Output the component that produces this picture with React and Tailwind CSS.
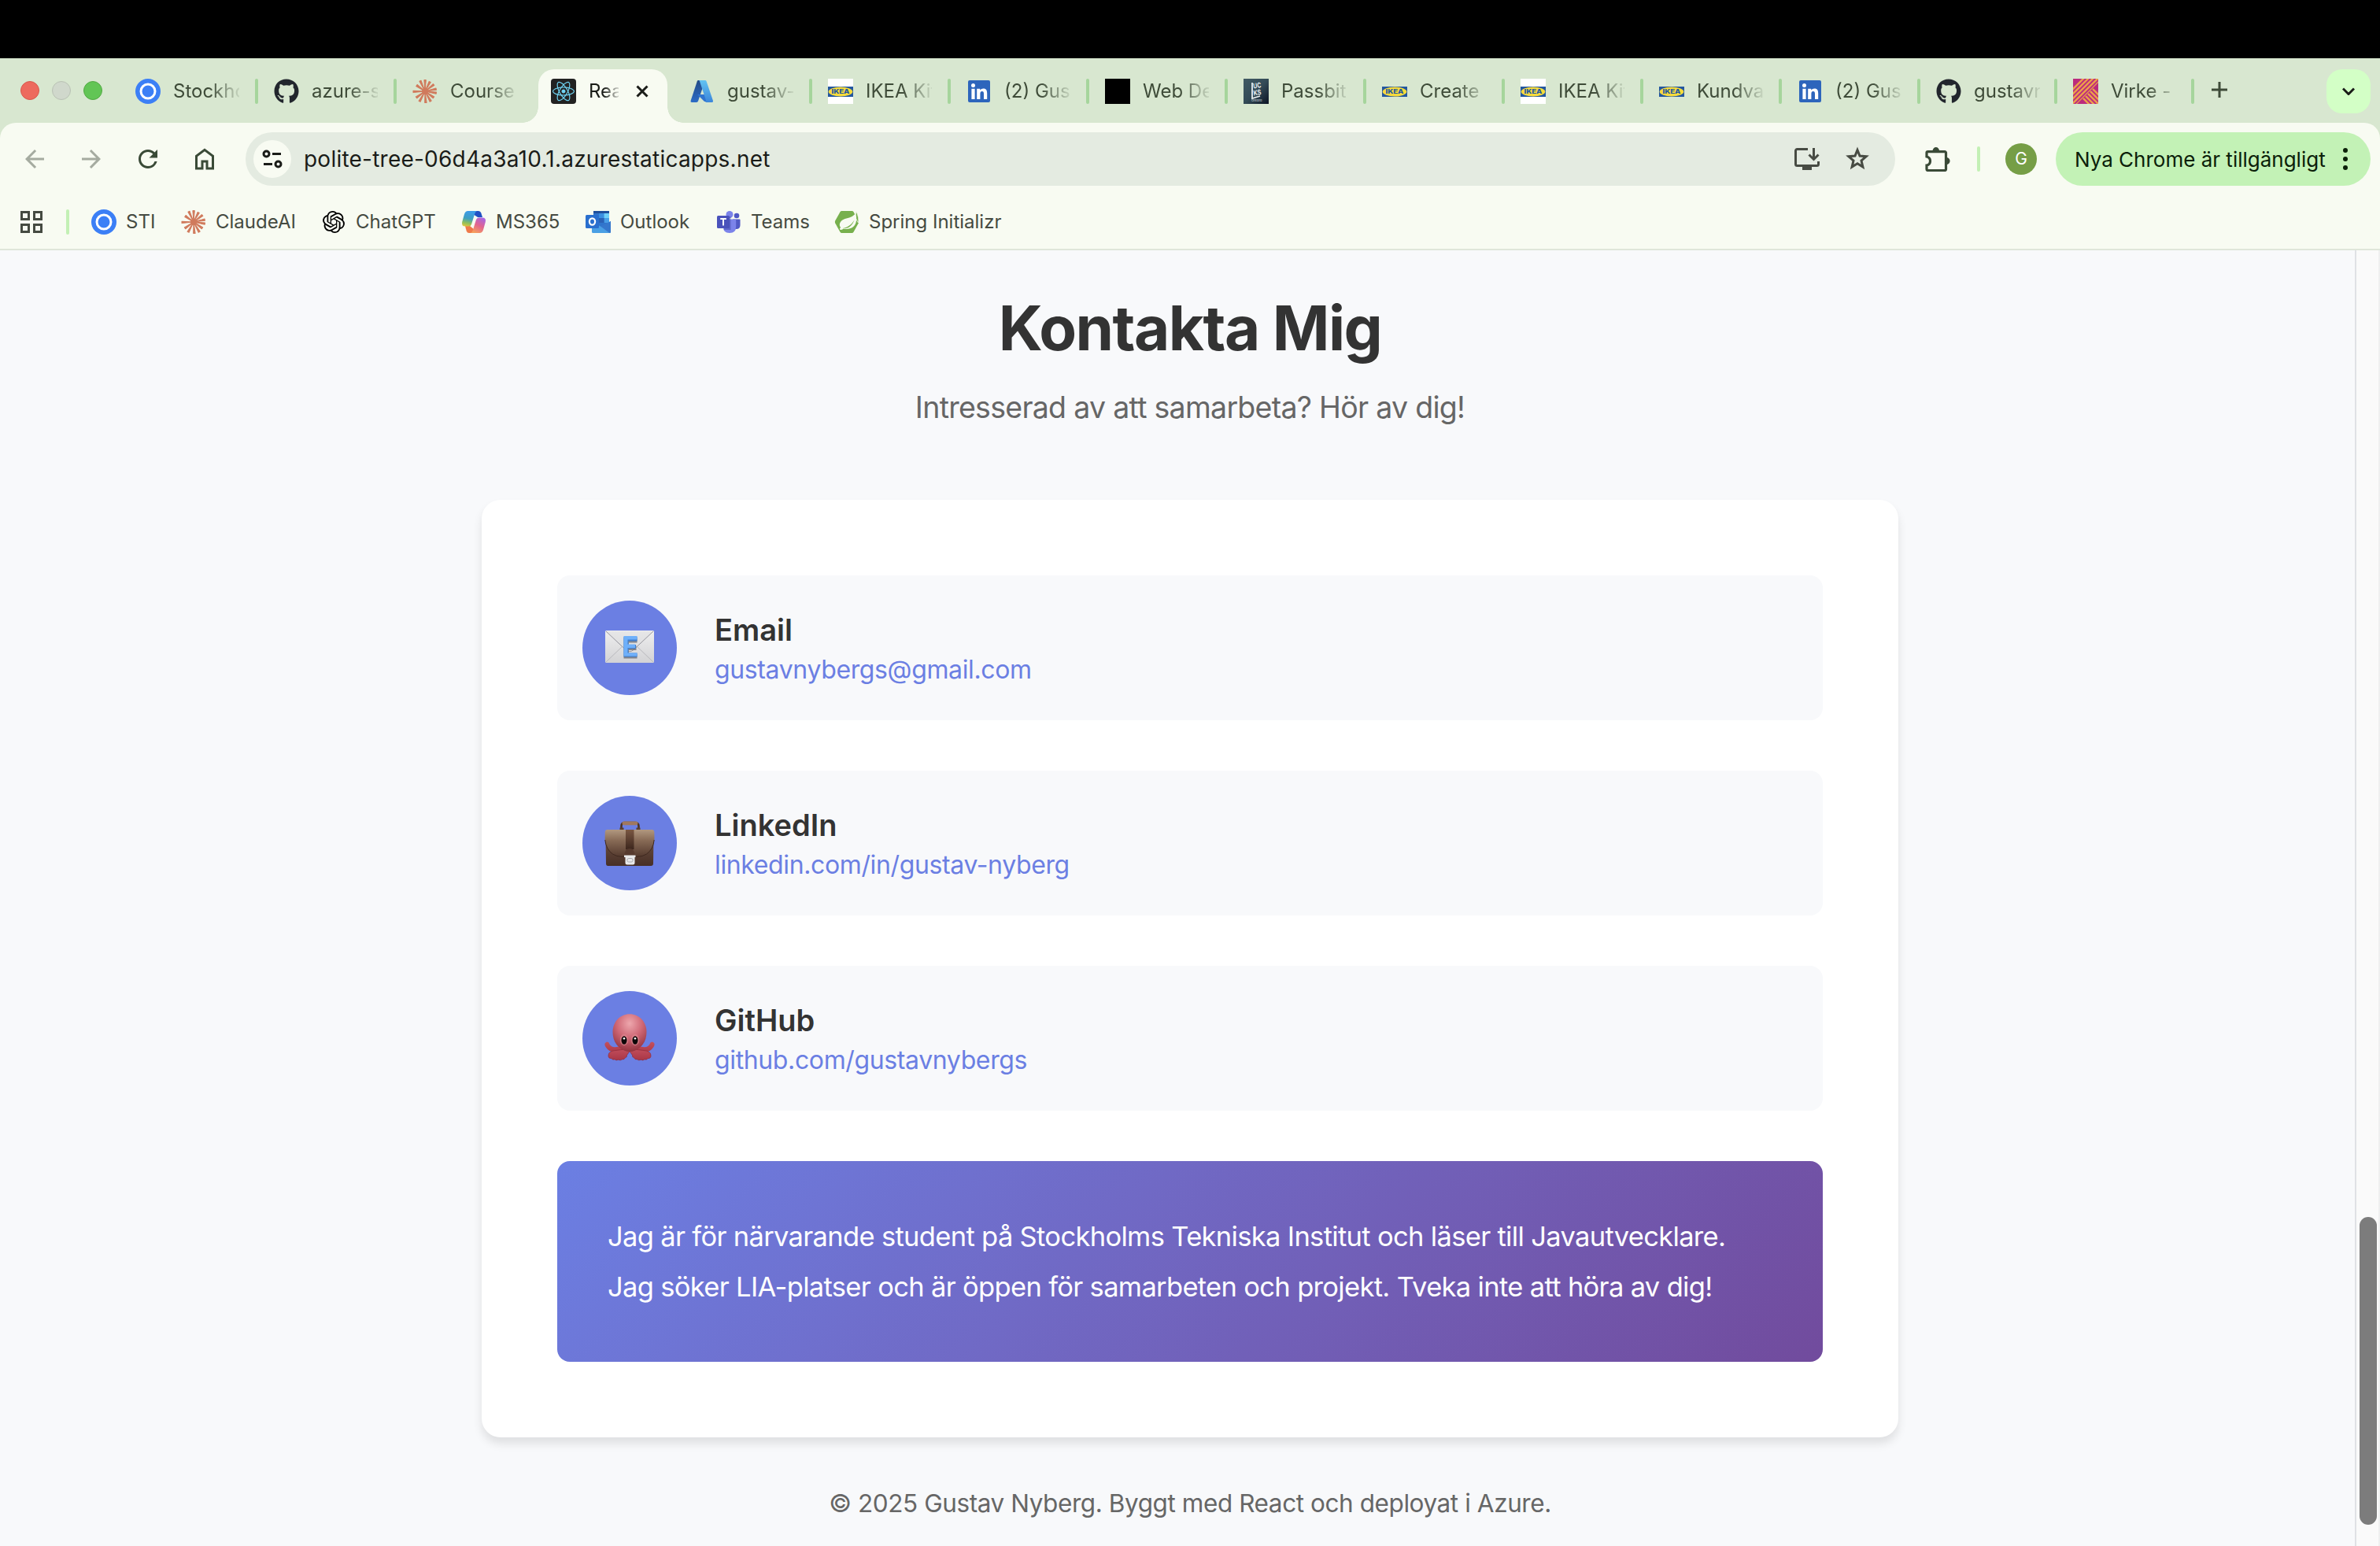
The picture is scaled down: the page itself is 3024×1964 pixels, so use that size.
import React from "react";
import { FaGithub, FaReact } from "react-icons/fa";
import { SiOpenai } from "react-icons/si";
import { MdArrowBack, MdArrowForward, MdRefresh } from "react-icons/md";

function StiIcon() {
  return (
    <svg viewBox="0 0 32 32" className="size-8">
      <circle cx="16" cy="16" r="16" fill="#3b7ff6" />
      <circle cx="16" cy="16" r="9" fill="none" stroke="#fff" strokeWidth="3" />
    </svg>
  );
}

const RAYS = [
  [0, 14.5], [27, 13.5], [52, 14], [78, 14.5], [98, 14.5], [125, 13.5],
  [150, 14.5], [176, 14.5], [208, 14.5], [234, 13.5], [268, 15], [305, 13], [335, 14.5],
];

function ClaudeIcon() {
  return (
    <svg viewBox="0 0 32 32" className="size-8">
      {RAYS.map(([a, r]) => (
        <path key={a} d={`M16 16L14.9 ${16 - r}L17.3 ${16 - r}Z`} transform={`rotate(${a} 16 16)`} fill="#d07a5c" stroke="#d07a5c" strokeWidth="1" strokeLinejoin="round" />
      ))}
      <circle cx="16" cy="16" r="4" fill="#d07a5c" />
    </svg>
  );
}

function GithubIcon() {
  return <FaGithub className="size-8 text-[#22262d]" />;
}

function ReactIcon() {
  return (
    <span className="flex size-8 items-center justify-center rounded bg-[#222]">
      <FaReact className="size-[28px] text-[#6fd3f2]" />
    </span>
  );
}

function AzureIcon() {
  return (
    <svg viewBox="0 0 32 32" className="size-8">
      <defs>
        <linearGradient id="azd" x1="0" y1="0" x2="0" y2="1"><stop offset="0" stopColor="#234a86" /><stop offset="1" stopColor="#2c6cc6" /></linearGradient>
        <linearGradient id="azl" x1="0" y1="0" x2="0" y2="1"><stop offset="0" stopColor="#62c3f2" /><stop offset="1" stopColor="#3c86da" /></linearGradient>
      </defs>
      <path d="M11 2h9L11 28.600q-.5 1.400-2 1.400H3q-2 0-1.400-2L9.800 3.200Q10.200 2 11 2Z" fill="url(#azd)" />
      <path d="M10 20h13l2 9H19Z" fill="#2f74cf" />
      <path d="M12 2h8q1.200 0 1.600 1.200L30 28q.6 2-1.400 2H20q1.600-.4 1-2.400L13 3.200Q12.800 2.300 12 2Z" fill="url(#azl)" />
    </svg>
  );
}

function IkeaLogo() {
  return (
    <svg viewBox="0 0 32 13" className="h-[13px] w-8">
      <rect width="32" height="13" fill="#23579f" />
      <ellipse cx="16" cy="6.500" rx="15.300" ry="6" fill="#f6da3c" />
      <text x="16" y="9.300" textAnchor="middle" textLength="23" lengthAdjust="spacingAndGlyphs" fontFamily="Inter, sans-serif" fontWeight="800" fontSize="7.600" fill="#23579f">IKEA</text>
    </svg>
  );
}

function IkeaSquare() {
  return <span className="flex size-8 items-center bg-white"><IkeaLogo /></span>;
}

function IkeaWide() {
  return <span className="flex size-8 items-center"><IkeaLogo /></span>;
}

function LinkedinIcon() {
  return (
    <svg viewBox="0 0 32 32" className="size-8">
      <rect x="2" y="2" width="28" height="28" rx="2" fill="#2d65bc" />
      <circle cx="8.500" cy="8.500" r="2.500" fill="#fff" />
      <path d="M6.400 12.700h4.200V26H6.400zM13.200 12.700h4v1.900c.7-1.200 2.100-2.200 4.200-2.200 4 0 4.800 2.600 4.800 6.200V26H22v-6.500c0-1.700-.2-3.500-2.200-3.500-2 0-2.400 1.600-2.400 3.400V26h-4.200z" fill="#fff" />
    </svg>
  );
}

function BlackIcon() {
  return <span className="block size-8 bg-black" />;
}

function LucksIcon() {
  return (
    <svg viewBox="0 0 32 32" className="size-8">
      <defs><linearGradient id="lk" x1="0" y1="0" x2="1" y2="1"><stop offset="0" stopColor="#405a63" /><stop offset=".5" stopColor="#334b57" /><stop offset="1" stopColor="#0c1424" /></linearGradient></defs>
      <rect width="32" height="32" fill="url(#lk)" />
      <path d="M11 5v20l10-3" fill="none" stroke="#e8eef0" strokeWidth="1.800" />
      <g fill="#e8eef0" fontFamily="Inter, sans-serif" fontWeight="700">
        <text x="12.500" y="12" fontSize="9" textLength="10" lengthAdjust="spacingAndGlyphs" transform="rotate(-8 16 10)">UC</text>
        <text x="12.500" y="21" fontSize="9" textLength="10" lengthAdjust="spacingAndGlyphs" transform="rotate(-8 16 18)">KS</text>
        <text x="10" y="29" fontSize="4" fillOpacity=".6">Örebro</text>
      </g>
    </svg>
  );
}

function VirkeIcon() {
  return (
    <svg viewBox="0 0 32 32" className="size-8">
      <defs>
        <clipPath id="va"><path d="M0 0H32V5L0 37Z" /></clipPath>
        <clipPath id="vb"><path d="M32 6V32H6L19 19Z" /></clipPath>
        <clipPath id="vc"><rect width="32" height="32" /></clipPath>
      </defs>
      <rect width="32" height="32" fill="#bb2b7d" />
      <g clipPath="url(#vc)" stroke="#eda04a" strokeWidth="2.300">
        <g clipPath="url(#va)">
          {[13, 19, 25, 31, 37].map((s) => <path key={s} d={`M-2 ${s + 2}L${s + 2} -2`} />)}
        </g>
        <g clipPath="url(#vb)">
          {[-12, -6, 0, 6, 12].map((s) => <path key={s} d={`M0 ${s}L34 ${s + 34}`} />)}
        </g>
      </g>
    </svg>
  );
}

const TABS = [
  { title: "Stockho", icon: StiIcon },
  { title: "azure-st", icon: GithubIcon },
  { title: "Course", icon: ClaudeIcon, noSep: true },
  { title: "Rea", icon: ReactIcon, active: true },
  { title: "gustav-", icon: AzureIcon },
  { title: "IKEA Kit", icon: IkeaSquare },
  { title: "(2) Gust", icon: LinkedinIcon },
  { title: "Web De", icon: BlackIcon },
  { title: "Passbit", icon: LucksIcon },
  { title: "Create", icon: IkeaWide },
  { title: "IKEA Kit", icon: IkeaSquare },
  { title: "Kundva", icon: IkeaWide },
  { title: "(2) Gust", icon: LinkedinIcon },
  { title: "gustavn", icon: GithubIcon, narrow: true },
  { title: "Virke -", icon: VirkeIcon, narrow: true },
];

function Tab({ title, icon: Icon, active, noSep, narrow }) {
  if (active) {
    return (
      <div className="relative mr-3 flex h-[68px] w-[164px] shrink-0 items-center self-end rounded-t-[20px] bg-[#f8fbf2] pb-3 pl-4">
        <span className="absolute bottom-0 -left-5 size-5 bg-[radial-gradient(circle_at_0_0,transparent_19.5px,#f8fbf2_20px)]" />
        <span className="absolute -right-5 bottom-0 size-5 bg-[radial-gradient(circle_at_100%_0,transparent_19.5px,#f8fbf2_20px)]" />
        <Icon />
        <span className="ml-4 w-[38px] overflow-hidden whitespace-nowrap text-[#1a1c18] [mask-image:linear-gradient(to_right,#000_50%,transparent_110%)]">{title}</span>
        <svg viewBox="0 0 16 16" className="ml-[22px] size-4 shrink-0"><path d="M1.500 1.500l13 13M14.500 1.500l-13 13" stroke="#1a1c18" strokeWidth="3" /></svg>
      </div>
    );
  }
  return (
    <div className={`flex h-[68px] shrink-0 items-center self-end pb-3 pl-4 ${narrow ? "w-[174px]" : "w-44"}`}>
      <Icon />
      <span className="ml-4 w-[84px] overflow-hidden whitespace-nowrap [mask-image:linear-gradient(to_right,#000_55%,transparent_105%)]">{title}</span>
      {!noSep && <span className={`h-8 w-1 rounded-full bg-[#a6d59c] ${narrow ? "ml-[18px]" : "ml-5"}`} />}
    </div>
  );
}

function TabStrip() {
  return (
    <div className="flex h-[82px] bg-[#d8e7d0] text-[24px] text-[#3e4b38]">
      <div className="flex w-[156px] shrink-0 gap-4 pt-[29px] pl-[26px]">
        <span className="size-6 rounded-full border border-[#d9584c] bg-[#ed6a5e]" />
        <span className="size-6 rounded-full border border-[#b9c2b4] bg-[#d0d8cc]" />
        <span className="size-6 rounded-full border border-[#52a943] bg-[#62c555]" />
      </div>
      {TABS.map((t, i) => <Tab key={i} {...t} />)}
      <svg viewBox="0 0 20 20" className="mt-[30px] ml-[18px] size-5 shrink-0"><path d="M10 0v20M0 10h20" stroke="#3e4b38" strokeWidth="3" /></svg>
      <span className="mt-[14px] mr-3 ml-auto flex size-14 items-center justify-center rounded-[20px] bg-[#d3ffc6]">
        <svg viewBox="0 0 16 10" className="h-2.5 w-4"><path d="M1 1.500l7 7 7-7" fill="none" stroke="#1a1c18" strokeWidth="3" /></svg>
      </span>
    </div>
  );
}

function AddressRow() {
  return (
    <div className="flex h-[92px] items-center">
      <div className="flex w-[312px] items-center gap-9 pl-[26px] text-[#3a4a37]">
        <MdArrowBack className="size-9 text-[#a5aba0]" />
        <MdArrowForward className="size-9 text-[#a5aba0]" />
        <MdRefresh className="size-9" />
        <svg viewBox="0 -960 960 960" className="size-9" fill="currentColor"><path d="M240-200h120v-240h240v240h120v-360L480-740 240-560v360Zm-80 80v-480l320-240 320 240v480H520v-240h-80v240H160Z" /></svg>
      </div>
      <div className="flex h-[68px] w-[2096px] items-center rounded-full bg-[#e4ebe1] pr-8 pl-2.5">
        <span className="flex size-12 items-center justify-center rounded-full bg-[#f8fbf2]">
          <svg viewBox="0 0 26 24" className="h-6 w-[26px]" fill="none" stroke="#1a1c18" strokeWidth="3"><circle cx="5.500" cy="5.500" r="3.500" /><path d="M13 5.500h11M2 18.500h11" /><circle cx="20.500" cy="18.500" r="3.500" /></svg>
        </span>
        <span className="ml-4 text-[28px] tracking-[0.23px] text-[#1a1c18]">polite-tree-06d4a3a10.1.azurestaticapps.net</span>
        <svg viewBox="0 0 32 28" className="ml-auto h-7 w-8" fill="none" stroke="#474b43" strokeWidth="3">
          <path d="M17 1.500H3.500a2 2 0 0 0-2 2v17a2 2 0 0 0 2 2h25a2 2 0 0 0 2-2V17M24.500 0v14M18.500 8.500l6 6 6-6" />
          <path d="M10 23h12v5H10z" fill="#474b43" stroke="none" />
        </svg>
        <svg viewBox="0 0 32 32" className="ml-8 size-8" fill="none" stroke="#474b43" strokeWidth="3">
          <path d="M16 4.500l3 7.500 8.200.7-6.200 5.400 1.900 8L16 21.800 9.100 26.100l1.900-8L4.800 12.700 13 12z" />
        </svg>
      </div>
      <svg viewBox="0 0 32 32" className="ml-[38px] size-8" fill="none" stroke="#3a4a37" strokeWidth="3.200">
        <path d="M3.500 6.600H25a1.500 1.500 0 0 1 1.500 1.500V29a1.500 1.500 0 0 1-1.500 1.500H3.500A1.500 1.500 0 0 1 2 29v-5c3-.4 4.500-2.800 4.500-5.400S5 13.700 2 13V8.100A1.500 1.500 0 0 1 3.500 6.600Z" />
        <path d="M9.500 6a4.300 5 0 0 1 8.600 0zM27 14a4.600 4.600 0 0 1 0 9.200z" fill="#3a4a37" stroke="none" />
      </svg>
      <span className="ml-[34px] h-8 w-1 rounded-full bg-[#c3f0b5]" />
      <span className="ml-8 flex size-10 items-center justify-center rounded-full bg-[#769e46] text-[21px] text-white">G</span>
      <div className="ml-6 flex h-[68px] w-[400px] items-center rounded-full bg-[#c3f2b6] pl-6 text-[#0b2009]">
        <span className="w-[328px] text-[26px] whitespace-nowrap">Nya Chrome är tillgängligt</span>
        <svg viewBox="0 0 8 28" className="ml-3 h-7 w-2" fill="currentColor"><circle cx="4" cy="3" r="3" /><circle cx="4" cy="14" r="3" /><circle cx="4" cy="25" r="3" /></svg>
      </div>
    </div>
  );
}

function GptIcon() {
  return <span className="flex size-8 items-center justify-center"><SiOpenai className="size-7 text-black" /></span>;
}

function CopilotIcon() {
  return (
    <svg viewBox="0 0 32 32" className="size-8">
      <defs>
        <linearGradient id="c1" x1=".3" y1="0" x2=".1" y2="1"><stop offset="0" stopColor="#3d9be8" /><stop offset=".45" stopColor="#3f9fc0" /><stop offset=".75" stopColor="#8fbf5a" /><stop offset="1" stopColor="#e8c63c" /></linearGradient>
        <linearGradient id="c2" x1=".8" y1="0" x2=".3" y2="1"><stop offset="0" stopColor="#a667e6" /><stop offset=".5" stopColor="#e2648f" /><stop offset="1" stopColor="#f6a05c" /></linearGradient>
      </defs>
      <path d="M15 2h7q2.500 0 3.300 2.500L27 10h-6l-6-4z" fill="#2150c4" />
      <path d="M17 30h-7q-2.500 0-3.300-2.500L5 21h6l6 5z" fill="#ef7a4a" />
      <path d="M8.500 2H20q-2 .8-2.800 3.500L13 19q-.8 2.500-3.500 2.500H5Q0 21.500 1.200 16L4 6Q5.300 2 8.500 2Z" fill="url(#c1)" />
      <path d="M23.500 30H12q2-.8 2.800-3.500L19 13q.8-2.500 3.500-2.500H27q5 0 3.800 5.500L28 26q-1.300 4-4.500 4Z" fill="url(#c2)" />
    </svg>
  );
}

function OutlookIcon() {
  return (
    <svg viewBox="0 0 32 32" className="size-8">
      <rect x="10" y="2" width="20" height="20" rx="1.500" fill="#2f74cc" />
      <path d="M10 2h20v3H10z" fill="#1f4f9c" />
      <path d="M17 5h6.500v6H17z" fill="#3a8ee0" /><path d="M23.500 5H30v6h-6.500z" fill="#6fd0f8" /><path d="M23.500 11H30v6h-6.500z" fill="#479ee6" /><path d="M17 11h6.500v6H17z" fill="#2a62b6" />
      <path d="M8 16l12 6 12-7v13.500q0 1.500-1.500 1.500h-21Q8 30 8 28.500Z" fill="#4a9fe4" />
      <path d="M32 15v13.500q0 1.500-1.500 1.500L19 21.500Z" fill="#3577cc" />
      <rect y="7" width="17" height="17" rx="1.500" fill="#2a6fce" />
      <ellipse cx="8.500" cy="15.500" rx="3.600" ry="4.200" fill="none" stroke="#fff" strokeWidth="2.200" />
    </svg>
  );
}

function TeamsIcon() {
  return (
    <svg viewBox="0 0 32 32" className="size-8">
      <circle cx="26" cy="8" r="3.300" fill="#5059c4" />
      <path d="M21 12.500h8.500q1 0 1 1V20q0 5-5 5H21z" fill="#5059c4" />
      <circle cx="17" cy="6.500" r="4.500" fill="#7b83ea" />
      <path d="M9 12.500h15q1.200 0 1.200 1.200V22q0 8-8.200 8t-8-8z" fill="#7b83ea" />
      <path d="M9 9h9.500v17H10z" fill="#4249a8" fillOpacity=".5" />
      <rect x="1" y="8" width="16" height="16" rx="1.500" fill="#4a52bb" />
      <path d="M5.200 12h7.600M9 12v8.500" stroke="#fff" strokeWidth="2" />
    </svg>
  );
}

function SpringIcon() {
  return (
    <svg viewBox="0 0 32 32" className="size-8">
      <path d="M9.500 2h13q1.300 0 2 1.200l6.300 11.400q.7 1.400 0 2.800L24.500 28.800q-.7 1.200-2 1.200h-13q-1.300 0-2-1.200L1.200 17.400q-.7-1.400 0-2.800L7.500 3.200Q8.200 2 9.500 2Z" fill="#77b04d" />
      <path d="M28 2.500q4 9 2.500 14.500L26 9Z" fill="#77b04d" stroke="#f8fbf2" strokeWidth=".8" />
      <path d="M27.200 4.500C29 12 28.500 18.500 24 22.300c-3.500 2.700-8.500 3-12.500 2.200-1.500 2-4.500 1.800-4.500.2 0-.7.600-1.200 1.300-1.500C5 19.500 7.500 14 13.500 12c5-1.600 10.200-1.800 13.700-7.500Z" fill="#f8fbf2" />
      <path d="M11 24C17 22.800 22 19.500 25.500 13.500 22.500 21.500 17.500 24.800 11 24Z" fill="#77b04d" />
    </svg>
  );
}

const BOOKMARKS = [
  { label: "STI", icon: StiIcon, w: "w-[114px]" },
  { label: "ClaudeAI", icon: ClaudeIcon, w: "w-[178px]" },
  { label: "ChatGPT", icon: GptIcon, w: "w-[178px]" },
  { label: "MS365", icon: CopilotIcon, w: "w-[158px]" },
  { label: "Outlook", icon: OutlookIcon, w: "w-[166px]" },
  { label: "Teams", icon: TeamsIcon, w: "w-[150px]" },
  { label: "Spring Initializr", icon: SpringIcon, w: "w-[220px]" },
];

function BookmarksBar() {
  return (
    <div className="flex h-[68px] items-center pl-[26px] text-[24px] text-[#454a41]">
      <svg viewBox="0 0 28 28" className="size-7" fill="none" stroke="#454a41" strokeWidth="3">
        <path d="M1.500 1.500h9v9h-9zM17.500 1.500h9v9h-9zM1.500 17.500h9v9h-9zM17.500 17.500h9v9h-9z" />
      </svg>
      <span className="mr-7 ml-[30px] h-8 w-1 rounded-full bg-[#c3f0b5]" />
      {BOOKMARKS.map(({ label, icon: Icon, w }) => (
        <span key={label} className={`flex shrink-0 items-center gap-3 ${w}`}>
          <Icon />
          <span className="whitespace-nowrap">{label}</span>
        </span>
      ))}
    </div>
  );
}

function EmailEmoji() {
  return (
    <svg viewBox="0 0 64 64" className="size-16">
      <defs>
        <linearGradient id="e1" x1="0" y1="0" x2="0" y2="1"><stop offset="0" stopColor="#eeeeef" /><stop offset="1" stopColor="#d3d3d5" /></linearGradient>
        <linearGradient id="e2" x1="0" y1="0" x2="0" y2="1"><stop offset="0" stopColor="#e6e6e7" /><stop offset="1" stopColor="#dcdcde" /></linearGradient>
      </defs>
      <rect x="1" y="10" width="62" height="41" rx="1.500" fill="url(#e1)" />
      <path d="M2 50L24 29M62 50L40 29" stroke="#b9b9bd" strokeWidth="1" />
      <path d="M2 11L27 34.500q5 4.500 10 0L62 11Z" fill="url(#e2)" />
      <path d="M2 11L27 34.500q5 4.500 10 0L62 11" fill="none" stroke="#97979f" strokeWidth="1" />
      <path d="M24.500 19.500h17v6H31v4h9.500v5.500H31V40h10.500v5.500h-17z" fill="#6d6f78" fillOpacity=".8" />
      <path d="M24.500 18h17v5.500H30.500v4.500h9.500v5H30.500v5.500h11V43.500h-17z" fill="#3f7fd0" />
      <path d="M24.500 17h17v4.500H29.500v6h9.500v4.500H29.500v6.500h12v4h-17z" fill="#6fb0fa" />
    </svg>
  );
}

function BriefcaseEmoji() {
  return (
    <svg viewBox="0 0 64 64" className="size-16">
      <defs>
        <linearGradient id="b1" x1="0" y1="0" x2="0" y2="1"><stop offset="0" stopColor="#6f5242" /><stop offset="1" stopColor="#472f26" /></linearGradient>
        <linearGradient id="b2" x1="0" y1="0" x2="0" y2="1"><stop offset="0" stopColor="#b19880" /><stop offset=".4" stopColor="#886b56" /><stop offset="1" stopColor="#553a2e" /></linearGradient>
        <linearGradient id="b3" x1="0" y1="0" x2="0" y2="1"><stop offset="0" stopColor="#7a5742" /><stop offset="1" stopColor="#3c261d" /></linearGradient>
      </defs>
      <path d="M21.500 15V10.500Q21.500 6 26 6H38.500Q43.500 6 43.500 10.500V15" fill="none" stroke="#4b3427" strokeWidth="2.600" />
      <rect x="22.500" y="4.600" width="20" height="4.600" rx="2.200" fill="#a0785f" />
      <path d="M19.500 12.500h5v3h-5zM40.500 12.500h5v3h-5z" fill="#5b4030" />
      <path d="M1.500 24h61l-.5 34q0 3-3 3H4.500Q2 61 2 58Z" fill="url(#b1)" />
      <path d="M3.500 15h57q2.500 0 2.800 3l.2 8Q63 39 54 45.500q-5 3.500-12 3.500H22Q15 49 10 45.500 1 39 .6 26l.2-8Q1 15 3.500 15Z" fill="url(#b2)" />
      <path d="M.8 28Q2 40 10.500 46q5 3.300 11.500 3.300h20q6.500 0 11.500-3.300Q62 40 63.200 28" fill="none" stroke="#3f291f" strokeWidth="1" />
      <path d="M27 15h10.500v25H27z" fill="url(#b3)" />
      <path d="M25.500 48q0-9 6.500-9t6.500 9z" fill="#573b2f" />
      <path d="M25 47.500h14.500v2.500H38.500v7q0 2.500-2.500 2.500h-7q-2.500 0-2.500-2.500v-7H25z" fill="#e9e9ea" />
      <rect x="29" y="51.500" width="7" height="4.500" rx="1.800" fill="none" stroke="#a9a9ac" strokeWidth="1" />
    </svg>
  );
}

function OctopusEmoji() {
  return (
    <svg viewBox="0 0 64 64" className="size-16">
      <defs>
        <radialGradient id="o1" cx=".5" cy=".25" r=".75"><stop offset="0" stopColor="#eda7ad" /><stop offset=".5" stopColor="#cf6876" /><stop offset="1" stopColor="#94343f" /></radialGradient>
        <linearGradient id="o2" x1="0" y1="0" x2="0" y2="1"><stop offset="0" stopColor="#c4505d" /><stop offset="1" stopColor="#a93646" /></linearGradient>
      </defs>
      {[false, true].map((flip) => (
        <g key={String(flip)} transform={flip ? "translate(64 0) scale(-1 1)" : undefined}>
          <path d="M32 43L22 41Q10 46 6.500 39.500 5.500 35.500 2 37-1 39 1.500 43 6 50 14 49.500L28 52Z" fill="url(#o2)" />
          <path d="M31 44Q24 47 14 47.500 5 48 5 54q0 4 4 3.500 1 2.500 4 1.300 2 2 4.500 .4 3 1.500 5-.4 3 .6 3.800-2 2.700-.8 2.200-3.300L33 47Z" fill="url(#o2)" stroke="#8f2a3a" strokeWidth=".7" />
        </g>
      ))}
      <path d="M32 1.300C44 1.300 53.500 11 53.500 24c0 13-7 20-14.500 23.500q-3.500 1.500-7 1.500t-7-1.500C17.500 44 10.500 37 10.500 24 10.500 11 20 1.300 32 1.300Z" fill="url(#o1)" />
      {[25, 39].map((x) => (
        <g key={x}>
          <ellipse cx={x} cy="34" rx="5.200" ry="7.200" fill="#d9818b" fillOpacity=".8" />
          <ellipse cx={x} cy="34.500" rx="3.500" ry="5.200" fill="#0d0808" />
          <circle cx={x} cy="32.300" r="1.300" fill="#fff" />
        </g>
      ))}
    </svg>
  );
}

const CONTACTS = [
  { title: "Email", link: "gustavnybergs@gmail.com", icon: EmailEmoji },
  { title: "LinkedIn", link: "linkedin.com/in/gustav-nyberg", icon: BriefcaseEmoji },
  { title: "GitHub", link: "github.com/gustavnybergs", icon: OctopusEmoji },
];

function Contact() {
  return (
    <main className="flex grow flex-col items-center pl-8">
      <h1 className="mt-[51px] text-[78px] leading-[96px] font-bold tracking-[-1.5px] text-[#333]">Kontakta Mig</h1>
      <p className="mt-[23px] text-[37.5px] leading-[60px] tracking-[-0.72px] text-[#666]">Intresserad av att samarbeta? Hör av dig!</p>
      <section className="mt-[87px] flex w-[1800px] flex-col gap-16 rounded-3xl bg-white p-24 shadow-[0_8px_12px_rgba(0,0,0,0.1)]">
        {CONTACTS.map(({ title, link, icon: Icon }) => (
          <div key={title} className="flex h-[184px] items-center gap-12 rounded-2xl bg-[#f8f9fb] p-8">
            <span className="flex size-[120px] items-center justify-center rounded-full bg-[#6b7fe3]"><Icon /></span>
            <div className="flex flex-col pt-1">
              <h3 className="text-[38px] leading-[50px] font-semibold text-[#333]">{title}</h3>
              <a className="text-[32px] leading-[51px] tracking-[-0.37px] text-[#6b7fe3]">{link}</a>
            </div>
          </div>
        ))}
        <div className="flex h-[255px] flex-col items-start justify-center rounded-2xl bg-linear-135 from-[#6b7fe3] to-[#714b9d] px-16 text-[34.5px] leading-[63.360px] tracking-[-0.67px] whitespace-nowrap text-white">
          <p>Jag är för närvarande student på Stockholms Tekniska Institut och läser till Javautvecklare.</p>
          <p>Jag söker LIA-platser och är öppen för samarbeten och projekt. Tveka inte att höra av dig!</p>
        </div>
      </section>
      <footer className="mt-[61px] text-[31.5px] leading-[46px] tracking-[-0.42px] text-[#666]">© 2025 Gustav Nyberg. Byggt med React och deployat i Azure.</footer>
    </main>
  );
}

export default function App() {
  return (
    <div className="flex h-[1964px] w-[3024px] flex-col overflow-hidden bg-[#f8f9fb] font-['Inter','Liberation_Sans',sans-serif]">
      <div className="h-[74px] shrink-0 bg-black" />
      <header className="shrink-0 bg-[#d8e7d0]">
        <TabStrip />
        <div className="h-[162px] rounded-t-[20px] border-b-2 border-[#dfe6da] bg-[#f8fbf2]">
          <AddressRow />
          <BookmarksBar />
        </div>
      </header>
      <div className="flex grow">
        <Contact />
        <aside className="w-8 border-x-2 border-l-[#dfe1e5] border-r-[#eff0f0] bg-[#fafafa] pt-[1228px] pl-1">
          <div className="h-[391px] w-[22px] rounded-full bg-[#7c7c7c]" />
        </aside>
      </div>
    </div>
  );
}
